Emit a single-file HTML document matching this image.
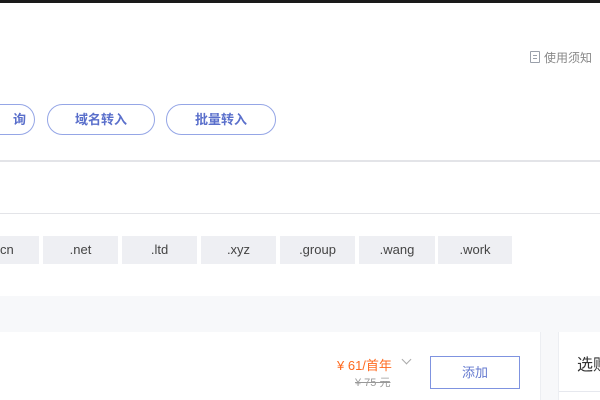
<!DOCTYPE html>
<html><head><meta charset="utf-8"><style>
*{margin:0;padding:0;box-sizing:border-box}
html,body{width:600px;height:400px;overflow:hidden}
body{background:#fff;font-family:"Liberation Sans","Noto Sans CJK SC",sans-serif}
#w{position:relative;width:600px;height:400px;overflow:hidden}
.a{position:absolute}
.btn{position:absolute;top:104px;height:31px;border:1px solid #95a6e6;border-radius:16px;color:#5a6fcb;font-size:13px;font-weight:bold;text-align:center;line-height:29px;white-space:nowrap}
.tag{position:absolute;top:236px;height:28px;background:#eeeff3;color:#444;font-size:13px;text-align:center;line-height:28px}
</style></head><body><div id="w">
<div class="a" style="left:0;top:0;width:600px;height:3px;background:#1a1a1a"></div>
<div class="a" style="left:530px;top:51px;width:10px;height:12px;border:1px solid #9aa0aa;border-radius:1px"></div>
<div class="a" style="left:533px;top:55px;width:4px;height:1px;background:#9aa0aa"></div>
<div class="a" style="left:533px;top:58px;width:4px;height:1px;background:#9aa0aa"></div>
<div class="a" style="left:544px;top:49px;font-size:12px;color:#888;white-space:nowrap">使用须知</div>
<div class="btn" style="left:0;width:35px;border-left:none;border-radius:0 16px 16px 0;text-align:right;padding-right:8px">询</div>
<div class="btn" style="left:47px;width:108px">域名转入</div>
<div class="btn" style="left:166px;width:110px">批量转入</div>
<div class="a" style="left:0;top:160px;width:600px;height:2px;background:#e3e4e8"></div>
<div class="a" style="left:0;top:213px;width:600px;height:1px;background:#e3e4e8"></div>
<div class="tag" style="left:0;width:39px;text-align:left;padding-left:0">cn</div>
<div class="tag" style="left:43px;width:75px">.net</div>
<div class="tag" style="left:122px;width:75px">.ltd</div>
<div class="tag" style="left:201px;width:75px">.xyz</div>
<div class="tag" style="left:280px;width:75px">.group</div>
<div class="tag" style="left:359px;width:76px">.wang</div>
<div class="tag" style="left:438px;width:74px">.work</div>
<div class="a" style="left:0;top:296px;width:600px;height:104px;background:#f7f8fa"></div>
<div class="a" style="left:0;top:332px;width:541px;height:68px;background:#fff;border-right:1px solid #eceef2"></div>
<div class="a" style="left:558px;top:332px;width:42px;height:68px;background:#fff;border-left:1px solid #eceef2;overflow:hidden">
<div class="a" style="left:18px;top:19px;font-size:16px;color:#333;white-space:nowrap">选购</div>
<div class="a" style="left:0;top:59px;width:42px;height:1px;background:#e6e8ee"></div>
</div>
<div class="a" style="left:337px;top:355px;font-size:13px;color:#ff6a1f;white-space:nowrap">¥ 61/首年</div>
<div class="a" style="left:403px;top:356px;width:7px;height:7px;border-right:1.5px solid #aaa;border-bottom:1.5px solid #aaa;transform:rotate(45deg)"></div>
<div class="a" style="left:355px;top:374px;font-size:11px;color:#999;text-decoration:line-through;white-space:nowrap">¥ 75 元</div>
<div class="a" style="left:430px;top:356px;width:90px;height:33px;border:1px solid #7f93e0;color:#6479cf;font-size:13px;text-align:center;line-height:31px">添加</div>
</div></body></html>
